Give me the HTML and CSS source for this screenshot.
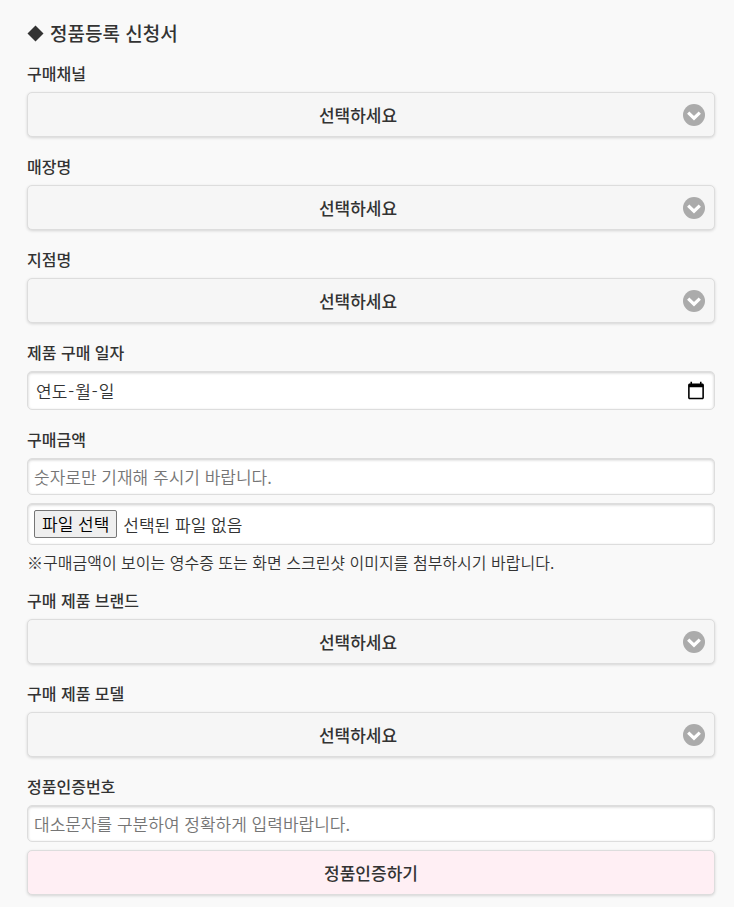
FILE: index.html
```html
<!DOCTYPE html>
<html lang="ko">
<head>
    <meta charset="UTF-8">
    <meta name="viewport" content="width=device-width, initial-scale=1.0">
    <title>정품등록 신청서</title>
    <link rel="stylesheet" href="styles.css">
</head>
<body>
    <svg class="defs" width="0" height="0" aria-hidden="true">
        <symbol id="arrow" viewBox="0 0 22 22">
            <circle cx="11" cy="11" r="11" fill="#ababab"/>
            <path d="M5.2 8.6 L11 14.2 L16.8 8.6" fill="none" stroke="#fff" stroke-width="3.2"/>
        </symbol>
    </svg>

    <h2><svg class="diamond" viewBox="0 0 18 18" aria-hidden="true"><path d="M9 0.5 L17.5 9 L9 17.5 L0.5 9 Z" fill="#333"/></svg>정품등록 신청서</h2>
    <form id="registerForm">
        <div class="field">
            <label for="channel">구매채널</label>
            <div class="select">
                <select id="channel" name="channel"><option value="">선택하세요</option></select>
                <svg class="arrow"><use href="#arrow"/></svg>
            </div>
        </div>

        <div class="field">
            <label for="store">매장명</label>
            <div class="select">
                <select id="store" name="store"><option value="">선택하세요</option></select>
                <svg class="arrow"><use href="#arrow"/></svg>
            </div>
        </div>

        <div class="field">
            <label for="branch">지점명</label>
            <div class="select">
                <select id="branch" name="branch"><option value="">선택하세요</option></select>
                <svg class="arrow"><use href="#arrow"/></svg>
            </div>
        </div>

        <div class="field">
            <label for="buyDate">제품 구매 일자</label>
            <div class="box date">
                <input type="date" id="buyDate" name="buyDate">
                <div class="date-hint"><span>연도</span><span>-</span><span>월</span><span>-</span><span>일</span></div>
            </div>
        </div>

        <div class="field">
            <label for="price">구매금액</label>
            <input type="text" class="box" id="price" name="price" placeholder="숫자로만 기재해 주시기 바랍니다.">
            <label class="box file" for="receipt">
                <input type="file" id="receipt" name="receipt" accept="image/*">
                <span class="file-button">파일 선택</span>
                <span>선택된 파일 없음</span>
            </label>
            <p class="note">※구매금액이 보이는 영수증 또는 화면 스크린샷 이미지를 첨부하시기 바랍니다.</p>
        </div>

        <div class="field">
            <label for="brand">구매 제품 브랜드</label>
            <div class="select">
                <select id="brand" name="brand"><option value="">선택하세요</option></select>
                <svg class="arrow"><use href="#arrow"/></svg>
            </div>
        </div>

        <div class="field">
            <label for="model">구매 제품 모델</label>
            <div class="select">
                <select id="model" name="model"><option value="">선택하세요</option></select>
                <svg class="arrow"><use href="#arrow"/></svg>
            </div>
        </div>

        <div class="field">
            <label for="serial">정품인증번호</label>
            <input type="text" class="box" id="serial" name="serial" placeholder="대소문자를 구분하여 정확하게 입력바랍니다.">
            <button type="submit">정품인증하기</button>
        </div>
    </form>
</body>
</html>
```
FILE: styles.css
```css
* {
    box-sizing: border-box;
}
body {
    margin: 0;
    padding: 20px 19px 12px 27px;
    background-color: #f9f9f9;
    color: #333;
    font-family: "Noto Sans CJK KR", sans-serif;
    font-size: 16px;
    line-height: 21px;
}
.defs {
    position: absolute;
}
h2 {
    display: flex;
    align-items: center;
    gap: 6px;
    margin: 0 0 17px;
    font-size: 19px;
    line-height: 26px;
    font-weight: 500;
}
.diamond {
    width: 17px;
    height: 17px;
}
form, .field {
    display: flex;
    flex-direction: column;
}
form {
    gap: 19px;
}
.field {
    gap: 8px;
}
.field > label:first-child {
    font-weight: 500;
}
.select {
    position: relative;
}
select, button {
    display: block;
    width: 100%;
    height: 45px;
    padding: 0 40px;
    border: 1px solid #ddd;
    border-radius: 5px;
    background: #f6f6f6;
    box-shadow: 0 1px 3px rgba(0,0,0,0.15);
    color: #333;
    font-family: inherit;
    font-size: 17px;
    font-weight: 500;
    text-align: center;
    text-align-last: center;
    appearance: none;
    cursor: pointer;
}
select {
    padding: 0 54px 0 28px;
}
button {
    background: #ffeff4;
}
.arrow {
    position: absolute;
    top: 12px;
    right: 10px;
    width: 22px;
    height: 22px;
    pointer-events: none;
}
.box {
    width: 100%;
    height: 37px;
    padding: 0 6px;
    border: 1px solid #ddd;
    border-radius: 5px;
    background: #fff;
    box-shadow: inset 0 1px 3px rgba(0,0,0,0.2);
    color: #333;
    font-family: inherit;
    font-size: 17px;
    font-weight: 350;
}
.box::placeholder {
    color: #757575;
}
.date {
    position: relative;
    height: 39px;
}
.date input {
    width: 100%;
    height: 100%;
    padding: 0 2px;
    border: 0;
    background: none;
    font-size: 16px;
}
.date input::-webkit-datetime-edit {
    opacity: 0;
}
.date input::-webkit-calendar-picker-indicator {
    width: 20px;
    height: 20px;
    padding: 0;
}
.date-hint {
    position: absolute;
    top: 8px;
    left: 8px;
    display: flex;
    gap: 1px;
    pointer-events: none;
}
.file {
    position: relative;
    display: flex;
    align-items: center;
    gap: 6px;
    height: 42px;
    cursor: pointer;
}
.file input {
    position: absolute;
    inset: 0;
    width: 100%;
    opacity: 0;
}
.file-button {
    padding: 2px 7px;
    border: 1px solid #767676;
    border-radius: 2px;
    background: #efefef;
    color: #000;
    line-height: 22px;
}
.note {
    margin: 0;
    line-height: 18px;
    font-weight: 350;
}
```
